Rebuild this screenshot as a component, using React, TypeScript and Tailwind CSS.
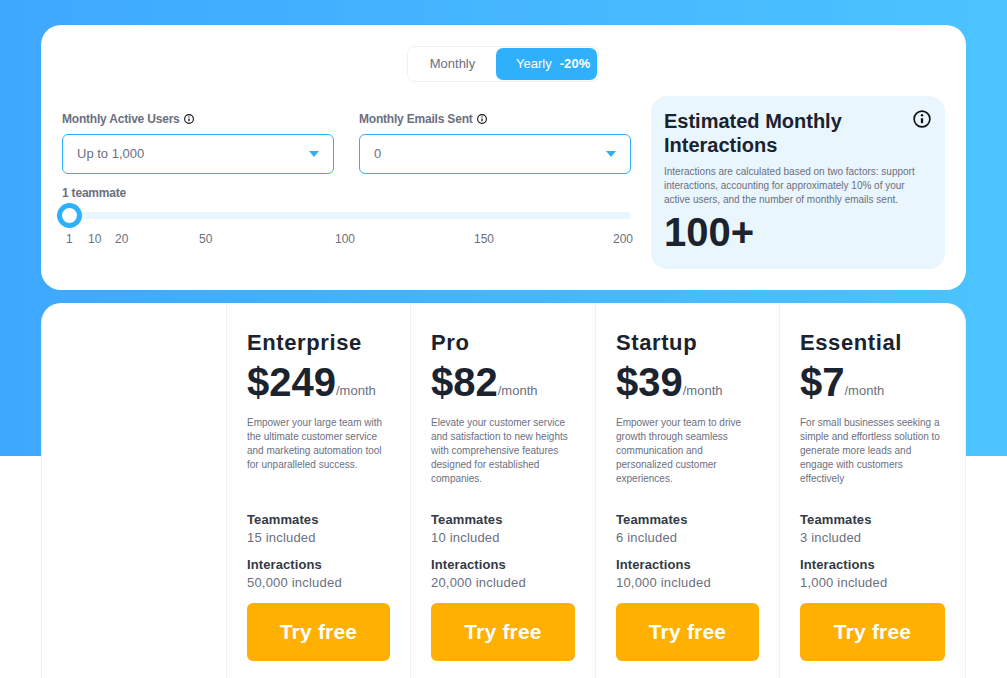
import React from "react";

const Info = ({ size = 10 }: { size?: number }) => (
  <svg width={size} height={size} viewBox="0 0 24 24" fill="none" stroke="#111" strokeWidth={size > 12 ? 2.2 : 2.6} className="shrink-0">
    <circle cx="12" cy="12" r="10.5" />
    <path d="M12 11v6.5" strokeWidth="3" />
    <circle cx="12" cy="7" r="1.6" fill="#111" stroke="none" />
  </svg>
);

const Select = ({ label, value }: { label: string; value: string }) => (
  <div>
    <div className="flex items-center gap-[4px] h-[14px] text-[12px] font-bold text-[#6b6f80] leading-[14px] tracking-[-0.2px]">
      {label} <Info />
    </div>
    <div className="mt-[8px] h-[40px] border border-[#2eb0fa] rounded-[6px] flex items-center justify-between pl-[14px] pr-[14px] text-[13px] text-[#6b6f80]">
      <span>{value}</span>
      <svg width="12" height="8" viewBox="0 0 12 8" className="mr-[-1px]"><path d="M1 1h10L6 7z" fill="#2eb0fa" /></svg>
    </div>
  </div>
);

const plans = [
  { name: "Enterprise", price: "$249", desc: ["Empower your large team with", "the ultimate customer service", "and marketing automation tool", "for unparalleled success."], team: "15", inter: "50,000" },
  { name: "Pro", price: "$82", desc: ["Elevate your customer service", "and satisfaction to new heights", "with comprehensive features", "designed for established", "companies."], team: "10", inter: "20,000" },
  { name: "Startup", price: "$39", desc: ["Empower your team to drive", "growth through seamless", "communication and", "personalized customer", "experiences."], team: "6", inter: "10,000" },
  { name: "Essential", price: "$7", desc: ["For small businesses seeking a", "simple and effortless solution to", "generate more leads and", "engage with customers", "effectively"], team: "3", inter: "1,000" },
];

export default function App() {
  return (
    <div className="min-h-[678px] h-[678px] overflow-hidden bg-white bg-[linear-gradient(90deg,#3ea8ff,#4cc4ff)] bg-no-repeat bg-[length:100%_456px] pt-[25px] px-[41px] font-['Liberation_Sans',Arial,sans-serif]">
      <div className="w-[925px] h-[265px] bg-white rounded-[20px] pt-[21px] px-[21px]">
        <div className="flex justify-center">
          <div className="h-[36px] w-[192px] border border-[#eef0f4] rounded-[8px] flex items-center pr-[1px] mr-[1px]">
            <div className="w-[90px] text-center text-[13px] text-[#6b6f80] pr-[1px]">Monthly</div>
            <div className="w-[101px] ml-[-2px] h-[32px] rounded-[7px] bg-[#2eb0fa] text-white flex items-center pl-[20px] gap-[8px]">
              <span className="text-[13px]">Yearly</span>
              <span className="text-[13px] font-bold tracking-[0.1px]">-20%</span>
            </div>
          </div>
        </div>
        <div className="flex mt-[14px] gap-[20px]">
          <div className="w-[569px] pt-[16px]">
            <div className="grid grid-cols-[272px_272px] gap-x-[25px]">
              <Select label="Monthly Active Users" value="Up to 1,000" />
              <Select label="Monthly Emails Sent" value="0" />
            </div>
            <div className="mt-[12px] text-[12px] font-bold text-[#6b6f80] leading-[14px] tracking-[-0.2px]">1 teammate</div>
            <div className="relative mt-[12px] h-[7px] rounded-full bg-[#e9f6fe]">
              <div className="absolute left-[-5px] top-[-9px] w-[25px] h-[25px] rounded-full border-[5px] border-[#2eb0fa] bg-white" />
            </div>
            <div className="relative mt-[13px] h-[14px] text-[12px] leading-[14px] text-[#6b6f80]">
              <span className="absolute left-[4px]">1</span>
              <span className="absolute left-[26px]">10</span>
              <span className="absolute left-[53px]">20</span>
              <span className="absolute left-[137px]">50</span>
              <span className="absolute left-[273px]">100</span>
              <span className="absolute left-[412px]">150</span>
              <span className="absolute left-[551px]">200</span>
            </div>
          </div>
          <div className="w-[294px] h-[173px] rounded-[16px] bg-[#e9f6fe] pt-[13px] px-[13px]">
            <div className="flex justify-between">
              <div className="text-[20px] font-bold leading-[24px] text-[#1a232e]">Estimated Monthly<br />Interactions</div>
              <div className="mt-[1px] mr-[1px]"><Info size={18} /></div>
            </div>
            <div className="mt-[8px] text-[10px] leading-[14px] text-[#6b6f80] whitespace-nowrap">
              Interactions are calculated based on two factors: support<br />interactions, accounting for approximately 10% of your<br />active users, and the number of monthly emails sent.
            </div>
            <div className="mt-[2px] text-[40px] font-bold leading-[46px] text-[#1a232e]">100+</div>
          </div>
        </div>
      </div>

      <div className="mt-[13px] w-[925px] h-[400px] bg-white rounded-t-[20px] grid grid-cols-[184px_184px_185px_184px_1fr] border-x border-[#eef0f4]">
        <div />
        {plans.map((p) => (
          <div key={p.name} className="border-l border-[#eef0f4] pl-[20px] pr-[20px] pt-[26px]">
            <div className="text-[22px] leading-[28px] font-bold text-[#1a232e] tracking-[0.6px]">{p.name}</div>
            <div className="mt-[2px] flex items-baseline h-[46px] leading-[46px]">
              <span className="text-[40px] font-bold text-[#1a232e]">{p.price}</span>
              <span className="text-[13px] text-[#6b6f80] -translate-y-px">/month</span>
            </div>
            <div className="mt-[11px] h-[95px] text-[10px] leading-[14px] text-[#6b6f80] whitespace-nowrap">
              {p.desc.map((d) => <div key={d}>{d}</div>)}
            </div>
            <div className="text-[13px] font-bold leading-[18px] text-[#333a45] tracking-[0.1px]">Teammates</div>
            <div className="text-[13px] leading-[18px] text-[#6b6f80] tracking-[0.2px]">{p.team} included</div>
            <div className="mt-[9px] text-[13px] font-bold leading-[18px] text-[#333a45] tracking-[0.1px]">Interactions</div>
            <div className="text-[13px] leading-[18px] text-[#6b6f80] tracking-[0.2px]">{p.inter} included</div>
            <div className="mt-[11px] h-[58px] rounded-[6px] bg-[#ffb000] flex items-center justify-center text-white font-bold text-[21px] tracking-[0.2px]">Try free</div>
          </div>
        ))}
      </div>
    </div>
  );
}
